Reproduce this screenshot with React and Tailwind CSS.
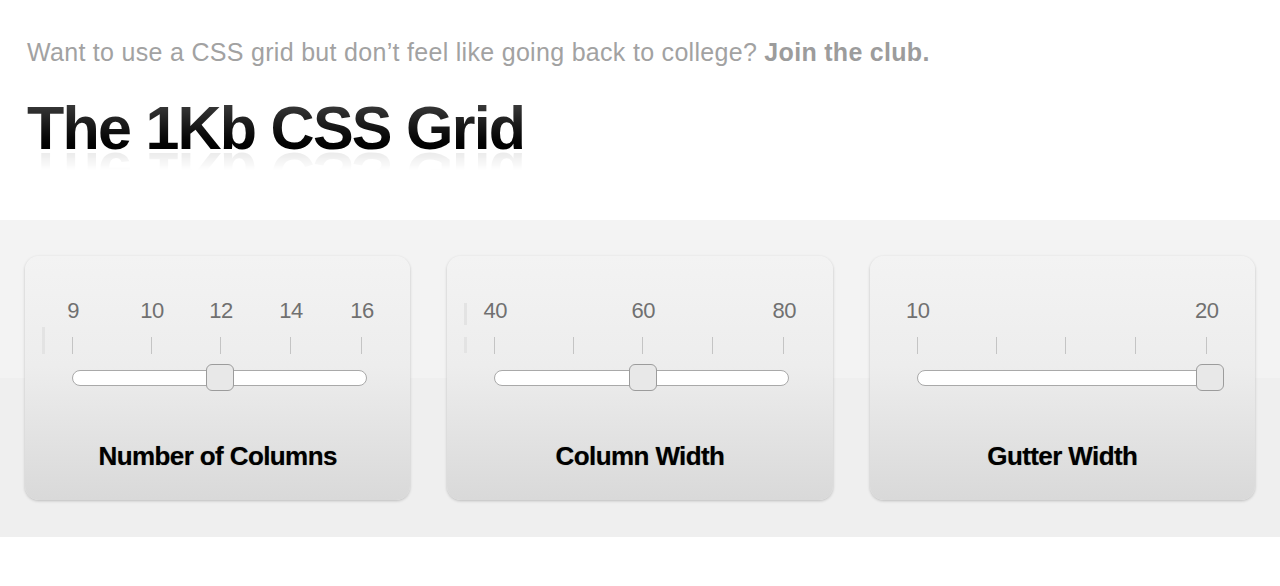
import React from "react";

const TICKS = [0, 79, 148, 218, 289];

function Slider({ labels, thumb, marks }) {
  return (
    <div className="relative ml-[47px] mt-[44px] flex w-[295px] flex-col">
      {marks.map((m, i) => (
        <div
          key={"m" + i}
          className="absolute left-[-30px] w-[3px] bg-[#e3e3e3]"
          style={{ top: m[0], height: m[1] }}
        />
      ))}
      <div className="relative h-[22px]">
        {labels.map((l, i) =>
          l ? (
            <span
              key={"l" + i}
              className="absolute top-0 -translate-x-1/2 text-[22px] leading-none tracking-[-0.5px] text-[#707070]"
              style={{ left: TICKS[i] + 1 }}
            >
              {l}
            </span>
          ) : null
        )}
      </div>
      <div className="relative mt-[15px] h-[17px]">
        {TICKS.map((t, i) => (
          <div
            key={"t" + i}
            className="absolute top-0 h-full w-px bg-[#c4c4c4]"
            style={{ left: t }}
          />
        ))}
      </div>
      <div className="relative mt-[16px] h-[16px] rounded-full border border-[#a9a9a9] bg-white">
        <div
          className="absolute top-[-7px] h-[27px] w-[28px] rounded-[6px] border border-[#9c9c9c] bg-[#e8e8e8]"
          style={{ left: thumb - 1 }}
        />
      </div>
    </div>
  );
}

function Card({ title, labels, thumb, marks }) {
  return (
    <div className="flex h-[244px] flex-col rounded-[14px] bg-gradient-to-b from-[#f3f3f3] via-[#ededed] via-45% to-[#d9d9d9] shadow-[0_1px_3px_rgba(0,0,0,0.22)]">
      <Slider labels={labels} thumb={thumb} marks={marks} />
      <div className="mt-[57px] text-center text-[26px] font-bold leading-none tracking-[-0.6px] text-black [text-shadow:0_0_1px_rgba(0,0,0,0.4)]">
        {title}
      </div>
    </div>
  );
}

export default function App() {
  return (
    <div className="h-[586px] w-[1280px] overflow-hidden bg-white font-['Liberation_Sans',Arial,sans-serif]">
      <div className="flex flex-col items-start px-[27px] pt-[38px]">
        <p className="text-[25px] leading-[28px] tracking-[0.3px] text-[#a2a2a2]">
          Want to use a CSS grid but don’t feel like going back to college?{" "}
          <b className="text-[#9c9c9c]">Join the club.</b>
        </p>
        <h1 className="mt-[32px] bg-gradient-to-b from-[#444] to-black bg-clip-text text-[61px] font-bold leading-none tracking-[-1.75px] text-transparent [-webkit-box-reflect:below_-16px_linear-gradient(transparent_55%,rgba(255,255,255,0.12))]">
          The 1Kb CSS Grid
        </h1>
      </div>
      <div className="mt-[61px] grid h-[317px] grid-cols-3 gap-[37px] bg-[linear-gradient(#f3f3f3_0,#f3f3f3_50%,#efefef_50%,#efefef_100%)] px-[25px] pt-[36px]">
        <Card
          title="Number of Columns"
          labels={["9", "10", "12", "14", "16"]}
          thumb={134}
          marks={[[27, 27]]}
        />
        <Card
          title="Column Width"
          labels={["40", null, "60", null, "80"]}
          thumb={135}
          marks={[
            [3, 22],
            [37, 16],
          ]}
        />
        <Card
          title="Gutter Width"
          labels={["10", null, null, null, "20"]}
          thumb={279}
          marks={[]}
        />
      </div>
    </div>
  );
}
